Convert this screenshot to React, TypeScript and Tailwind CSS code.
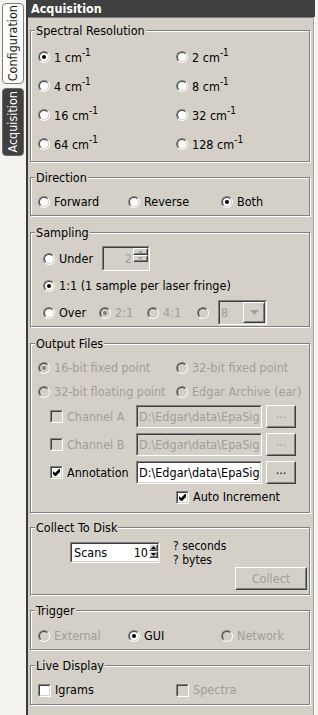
import React from "react";

const DIS = "text-[#a19e97]";

function Radio({ checked = false, disabled = false }: { checked?: boolean; disabled?: boolean }) {
  return (
    <span className="flex-none w-[12px] h-[12px] rounded-full border border-t-[#808080] border-l-[#808080] border-r-white border-b-white">
      <span
        className={`flex items-center justify-center w-full h-full rounded-full border border-t-[#404040] border-l-[#404040] border-r-[#d4d0c8] border-b-[#d4d0c8] ${
          disabled ? "bg-[#d4d0c8]" : "bg-white"
        }`}
      >
        {checked && <span className={`w-[4px] h-[4px] rounded-full ${disabled ? "bg-[#808080]" : "bg-black"}`} />}
      </span>
    </span>
  );
}

function Check({ checked = false, disabled = false }: { checked?: boolean; disabled?: boolean }) {
  return (
    <span className="flex-none w-[13px] h-[13px] border border-t-[#808080] border-l-[#808080] border-r-white border-b-white">
      <span
        className={`block w-full h-full border border-t-[#404040] border-l-[#404040] border-r-[#d4d0c8] border-b-[#d4d0c8] ${
          disabled ? "bg-[#d4d0c8]" : "bg-white"
        }`}
      >
        {checked && (
          <svg width="9" height="9" viewBox="0 0 9 9" className="block">
            <polygon points="1,3 3,5 7,1 8,1 8,4 4,8 3,8 1,6" fill="#000" />
          </svg>
        )}
      </span>
    </span>
  );
}

function Opt({
  checked,
  disabled,
  children,
  className = "",
}: {
  checked?: boolean;
  disabled?: boolean;
  children: React.ReactNode;
  className?: string;
}) {
  return (
    <div className={`flex items-center h-[16px] gap-[4px] whitespace-nowrap ${disabled ? DIS : ""} ${className}`}>
      <Radio checked={checked} disabled={disabled} />
      <span>{children}</span>
    </div>
  );
}

function Chk({
  checked,
  disabled,
  children,
  className = "",
}: {
  checked?: boolean;
  disabled?: boolean;
  children: React.ReactNode;
  className?: string;
}) {
  return (
    <div className={`flex items-center h-[16px] gap-[4px] whitespace-nowrap ${disabled ? DIS : ""} ${className}`}>
      <Check checked={checked} disabled={disabled} />
      <span>{children}</span>
    </div>
  );
}

function Group({ title, className = "", children }: { title: string; className?: string; children?: React.ReactNode }) {
  return (
    <div
      className={`relative flex-none border border-[#808080] shadow-[inset_1px_1px_0_#fff,1px_1px_0_#fff] ${className}`}
    >
      <span className="absolute left-[4px] -top-[8px] bg-[#d4d0c8] px-[1px] leading-[15px] whitespace-nowrap">
        {title}
      </span>
      {children}
    </div>
  );
}

function Sunken({
  disabled,
  className = "",
  children,
}: {
  disabled?: boolean;
  className?: string;
  children?: React.ReactNode;
}) {
  return (
    <div className={`flex-none border border-t-[#808080] border-l-[#808080] border-r-white border-b-white ${className}`}>
      <div
        className={`h-full flex items-center overflow-hidden border border-t-[#404040] border-l-[#404040] border-r-[#d4d0c8] border-b-[#d4d0c8] ${
          disabled ? "bg-[#d4d0c8]" : "bg-white"
        }`}
      >
        {children}
      </div>
    </div>
  );
}

function Raised({ className = "", children }: { className?: string; children?: React.ReactNode }) {
  return (
    <div className={`flex-none border border-t-white border-l-white border-r-[#404040] border-b-[#404040] ${className}`}>
      <div className="h-full flex items-center justify-center border border-t-[#d4d0c8] border-l-[#d4d0c8] border-r-[#808080] border-b-[#808080] bg-[#d4d0c8]">
        {children}
      </div>
    </div>
  );
}

function Tri({ up, color }: { up?: boolean; color: string }) {
  return (
    <svg width="5" height="3" viewBox="0 0 5 3" className="block">
      <polygon points={up ? "0,3 5,3 2.5,0" : "0,0 5,0 2.5,3"} fill={color} />
    </svg>
  );
}

function SpinButtons({ color, className = "" }: { color: string; className?: string }) {
  return (
    <div className={`flex flex-col h-full flex-none ${className}`}>
      <Raised className="flex-1">
        <Tri up color={color} />
      </Raised>
      <Raised className="flex-1">
        <Tri color={color} />
      </Raised>
    </div>
  );
}

function Cm({ n }: { n: string }) {
  return (
    <span>
      {n} cm<span className="text-[10px] leading-none align-[6px]">-1</span>
    </span>
  );
}

function PathRow({ label, enabled }: { label: string; enabled?: boolean }) {
  return (
    <div className="flex items-center h-[23px] pl-[19px]">
      <Chk checked={enabled} disabled={!enabled} className="w-[86px]">
        {label}
      </Chk>
      <Sunken disabled={!enabled} className="w-[126px] h-[23px]">
        <span className={`pl-[1px] whitespace-nowrap ${enabled ? "text-black" : DIS}`}>D:\Edgar\data\EpaSig</span>
      </Sunken>
      <Raised className="w-[30px] h-[23px] ml-[4px]">
        <span className={`${enabled ? "text-black" : DIS} leading-none -mt-[4px]`}>...</span>
      </Raised>
    </div>
  );
}

export default function App() {
  return (
    <div className="w-[318px] h-[715px] flex overflow-hidden bg-[#f4f3ef] text-[12.5px] leading-[16px] text-black font-['DejaVu_Sans_Condensed','DejaVu_Sans',sans-serif]">
      {/* side tabs */}
      <div className="w-[26px] flex-none flex flex-col items-center pt-[3px] gap-[4px]">
        <div className="w-[22px] h-[81px] rounded-[4px] border border-[#7d7d7d] bg-[#fcfcfb] flex items-center justify-center text-[#1a1a1a]">
          <span className="[writing-mode:vertical-rl] rotate-180 whitespace-nowrap">Configuration</span>
        </div>
        <div className="w-[22px] h-[68px] rounded-[4px] border border-[#6b6b6b] bg-[#404040] flex items-center justify-center text-white">
          <span className="[writing-mode:vertical-rl] rotate-180 whitespace-nowrap">Acquisition</span>
        </div>
      </div>
      <div className="w-[2px] flex-none bg-[#3a3a3a]" />

      {/* main column */}
      <div className="w-[287px] flex-none flex flex-col">
        <div className="h-[17px] flex-none bg-[#404040] text-white font-bold pl-[3px] leading-[17px]">Acquisition</div>
        <div className="flex flex-1">
          <div className="w-[285px] flex-none flex flex-col bg-[#d4d0c8]">
            <div className="h-px flex-none bg-[#808080]" />

            <div className="flex flex-col pl-[2px] pr-[3px]">
              {/* Spectral Resolution */}
              <Group title="Spectral Resolution" className="mt-[12px] h-[132px]">
                <div className="grid grid-cols-[138px_1fr] gap-y-[13px] pt-[18px] pl-[7px]">
                  <Opt checked>
                    <Cm n="1" />
                  </Opt>
                  <Opt>
                    <Cm n="2" />
                  </Opt>
                  <Opt>
                    <Cm n="4" />
                  </Opt>
                  <Opt>
                    <Cm n="8" />
                  </Opt>
                  <Opt>
                    <Cm n="16" />
                  </Opt>
                  <Opt>
                    <Cm n="32" />
                  </Opt>
                  <Opt>
                    <Cm n="64" />
                  </Opt>
                  <Opt>
                    <Cm n="128" />
                  </Opt>
                </div>
              </Group>

              {/* Direction */}
              <Group title="Direction" className="mt-[15px] h-[39px]">
                <div className="grid grid-cols-[90px_93px_1fr] pt-[16px] pl-[7px]">
                  <Opt>Forward</Opt>
                  <Opt>Reverse</Opt>
                  <Opt checked>Both</Opt>
                </div>
              </Group>

              {/* Sampling */}
              <Group title="Sampling" className="mt-[16px] h-[95px]">
                <div className="flex flex-col pt-[12px] pl-[12px]">
                  <div className="flex items-center h-[27px]">
                    <Opt className="w-[59px]">Under</Opt>
                    <Sunken disabled className="w-[48px] h-[25px]">
                      <span className={`flex-1 text-right pr-[1px] ${DIS}`}>2</span>
                      <SpinButtons color="#a0a0a0" className="w-[15px]" />
                    </Sunken>
                  </div>
                  <div className="flex items-center h-[27px]">
                    <Opt checked>1:1 (1 sample per laser fringe)</Opt>
                  </div>
                  <div className="flex items-center h-[27px]">
                    <Opt className="w-[56px]">Over</Opt>
                    <Opt checked disabled className="w-[48px]">
                      2:1
                    </Opt>
                    <Opt disabled className="w-[50px]">
                      4:1
                    </Opt>
                    <Radio disabled />
                    <Sunken disabled className="ml-[9px] w-[49px] h-[25px]">
                      <span className={`flex-1 pl-[1px] ${DIS}`}>8</span>
                      <Raised className="w-[22px] h-full">
                        <svg width="9" height="5" viewBox="0 0 9 5" className="block">
                          <polygon points="0,0 9,0 4.5,5" fill="#a0a0a0" />
                        </svg>
                      </Raised>
                    </Sunken>
                  </div>
                </div>
              </Group>

              {/* Output Files */}
              <Group title="Output Files" className="mt-[16px] h-[170px]">
                <div className="flex flex-col pt-[16px] pl-[7px]">
                  <div className="grid grid-cols-[138px_1fr] gap-y-[8px]">
                    <Opt checked disabled>
                      16-bit fixed point
                    </Opt>
                    <Opt disabled>32-bit fixed point</Opt>
                    <Opt disabled>32-bit floating point</Opt>
                    <Opt disabled>Edgar Archive (ear)</Opt>
                  </div>
                  <div className="flex flex-col gap-[5px] mt-[5px] -ml-[7px]">
                    <PathRow label="Channel A" />
                    <PathRow label="Channel B" />
                    <PathRow label="Annotation" enabled />
                  </div>
                  <div className="pl-[138px] mt-[5px]">
                    <Chk checked>Auto Increment</Chk>
                  </div>
                </div>
              </Group>

              {/* Collect To Disk */}
              <Group title="Collect To Disk" className="mt-[14px] h-[68px]">
                <div className="flex flex-col pt-[14px] pr-[2px]">
                  <div className="flex items-center h-[21px] pl-[39px]">
                    <Sunken className="w-[90px] h-[21px]">
                      <span className="pl-[2px]">Scans</span>
                      <span className="flex-1 text-right pr-[1px]">10</span>
                      <SpinButtons color="#000" className="w-[9px]" />
                    </Sunken>
                    <div className="ml-[13px] flex flex-col text-[12px] leading-[14px] whitespace-nowrap">
                      <span>? seconds</span>
                      <span>? bytes</span>
                    </div>
                  </div>
                  <div className="flex justify-end mt-[4px]">
                    <Raised className="w-[72px] h-[23px]">
                      <span className={DIS}>Collect</span>
                    </Raised>
                  </div>
                </div>
              </Group>

              {/* Trigger */}
              <Group title="Trigger" className="mt-[15px] h-[40px]">
                <div className="grid grid-cols-[90px_93px_1fr] pt-[17px] pl-[7px]">
                  <Opt disabled>External</Opt>
                  <Opt checked>GUI</Opt>
                  <Opt disabled>Network</Opt>
                </div>
              </Group>

              {/* Live Display */}
              <Group title="Live Display" className="mt-[15px] h-[40px]">
                <div className="grid grid-cols-[138px_1fr] pt-[16px] pl-[7px]">
                  <Chk>Igrams</Chk>
                  <Chk disabled>Spectra</Chk>
                </div>
              </Group>
            </div>
          </div>
          <div className="w-px flex-none bg-[#a0a0a0]" />
          <div className="w-px flex-none bg-white" />
        </div>
      </div>
    </div>
  );
}
